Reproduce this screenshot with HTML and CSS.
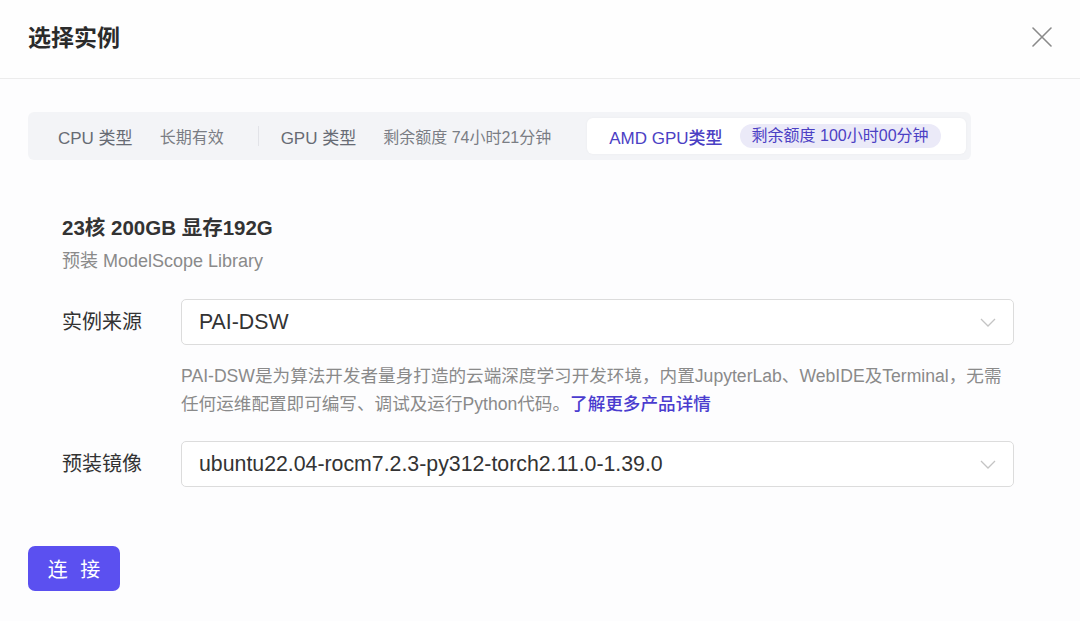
FILE: index.html
```html
<!DOCTYPE html>
<html lang="zh-CN">
<head>
  <meta charset="UTF-8" />
  <title>选择实例</title>
  <link rel="stylesheet" href="styles.css">
</head>
<body>
  <div class="dialog">
    <div class="dialog-header">
      <h2>选择实例</h2>
      <button class="close-btn" aria-label="关闭">
        <svg width="20" height="20" viewBox="0 0 20 20">
          <path d="M1 1 L19 19 M19 1 L1 19" stroke="#8a8a8a" stroke-width="1.6" fill="none" stroke-linecap="round"/>
        </svg>
      </button>
    </div>

    <div class="dialog-body">
      <div class="tabs">
        <div class="tab">
          <span class="tab-name">CPU 类型</span>
          <span class="tab-sub">长期有效</span>
        </div>
        <span class="tab-divider"></span>
        <div class="tab after-divider">
          <span class="tab-name">GPU 类型</span>
          <span class="tab-sub">剩余额度 74小时21分钟</span>
        </div>
        <div class="tab active">
          <span class="tab-name">AMD GPU类型</span>
          <span class="tab-sub">剩余额度 100小时00分钟</span>
        </div>
      </div>

      <div class="spec">
        <h3>23核 200GB 显存192G</h3>
        <p>预装 ModelScope Library</p>
      </div>

      <div class="form">
        <div class="form-row">
          <label>实例来源</label>
          <div class="field">
            <div class="select">
              <span>PAI-DSW</span>
              <svg class="chevron" width="16" height="9" viewBox="0 0 16 9">
                <path d="M1 1 L8 8 L15 1" stroke="#c4c4c4" stroke-width="1.3" fill="none"/>
              </svg>
            </div>
            <p class="hint">PAI-DSW是为算法开发者量身打造的云端深度学习开发环境，内置JupyterLab、WebIDE及Terminal，无需任何运维配置即可编写、调试及运行Python代码。<a href="#">了解更多产品详情</a></p>
          </div>
        </div>

        <div class="form-row">
          <label>预装镜像</label>
          <div class="field">
            <div class="select">
              <span>ubuntu22.04-rocm7.2.3-py312-torch2.11.0-1.39.0</span>
              <svg class="chevron" width="16" height="9" viewBox="0 0 16 9">
                <path d="M1 1 L8 8 L15 1" stroke="#c4c4c4" stroke-width="1.3" fill="none"/>
              </svg>
            </div>
          </div>
        </div>
      </div>

      <button class="connect-btn">连 接</button>
    </div>
  </div>
</body>
</html>
```

FILE: styles.css
```css
:root {
  --accent: #5b50f0;
  --accent-text: #4b40c4;
  --text: #333333;
  --muted: #8a8a8a;
  --border: #dcdcdc;
}

* {
  box-sizing: border-box;
  margin: 0;
  padding: 0;
}

body {
  background: #fdfdfe;
  color: var(--text);
  font-family: "Liberation Sans", "Noto Sans CJK SC", sans-serif;
}

.dialog {
  width: 1080px;
  height: 621px;
  overflow: hidden;
}

.dialog-header {
  height: 79px;
  padding: 0 28px;
  display: flex;
  align-items: center;
  justify-content: space-between;
  border-bottom: 1px solid #ececec;
  background: #fefefe;
}

.dialog-header h2 {
  font-size: 23px;
  font-weight: 700;
  color: #2b2b2b;
  margin-top: -6px;
}

.close-btn {
  background: none;
  border: none;
  width: 20px;
  height: 20px;
  margin-top: -4px;
  cursor: pointer;
  display: flex;
}

.dialog-body {
  padding: 33px 28px 0;
}

/* tab strip */
.tabs {
  width: 943px;
  height: 48px;
  padding: 6px;
  background: #f3f4f7;
  border-radius: 6px;
  display: flex;
  align-items: center;
}

.tab {
  height: 36px;
  padding: 0 24px;
  display: flex;
  align-items: center;
  gap: 27px;
  border-radius: 6px;
  flex-shrink: 0;
  white-space: nowrap;
}

.tab.after-divider {
  padding-left: 22px;
}

.tab-name {
  font-size: 17px;
  color: #676b74;
}

.tab-sub {
  font-size: 16px;
  color: #7a7d84;
}

.tab-divider {
  width: 1px;
  height: 20px;
  flex-shrink: 0;
  background: #e2e3e8;
  margin-left: 10px;
}

.tab.active {
  margin-left: 12px;
  padding: 0 25px 0 22px;
  gap: 17px;
  background: #ffffff;
  box-shadow: 0 0 3px rgba(0, 0, 0, 0.04);
}

.tab.active .tab-name {
  color: var(--accent-text);
  font-weight: 500;
}

.tab.active .tab-sub {
  height: 24px;
  line-height: 24px;
  padding: 0 12px;
  border-radius: 12px;
  background: #ebeaf8;
  color: var(--accent-text);
}

/* instance spec */
.spec {
  margin-top: 54px;
  padding-left: 34px;
}

.spec h3 {
  font-size: 20.5px;
  font-weight: 700;
  line-height: 28px;
  color: #333;
}

.spec p {
  margin-top: 6px;
  font-size: 18px;
  line-height: 26px;
  color: var(--muted);
}

/* form */
.form {
  margin-top: 25px;
  padding: 0 38px 0 34px;
  display: flex;
  flex-direction: column;
  gap: 23px;
}

.form-row {
  display: flex;
  align-items: flex-start;
}

.form-row label {
  width: 119px;
  flex-shrink: 0;
  height: 46px;
  line-height: 46px;
  font-size: 20px;
  color: #333;
}

.field {
  flex: 1;
}

.select {
  height: 46px;
  padding: 0 17px 0 17px;
  border: 1px solid var(--border);
  border-radius: 5px;
  background: #fff;
  display: flex;
  align-items: center;
  justify-content: space-between;
  font-size: 21.3px;
  color: #333;
}

.hint {
  margin-top: 17px;
  font-size: 17.6px;
  line-height: 28px;
  color: var(--muted);
}

.hint a {
  color: #4a3ccf;
  text-decoration: none;
  font-weight: 500;
}

.connect-btn {
  margin-top: 59px;
  width: 92px;
  height: 45px;
  background: var(--accent);
  color: #fff;
  border: none;
  border-radius: 7px;
  font-size: 20px;
  letter-spacing: 4px;
  text-indent: 4px;
  font-family: "Noto Sans CJK SC", sans-serif;
  cursor: pointer;
}
```
